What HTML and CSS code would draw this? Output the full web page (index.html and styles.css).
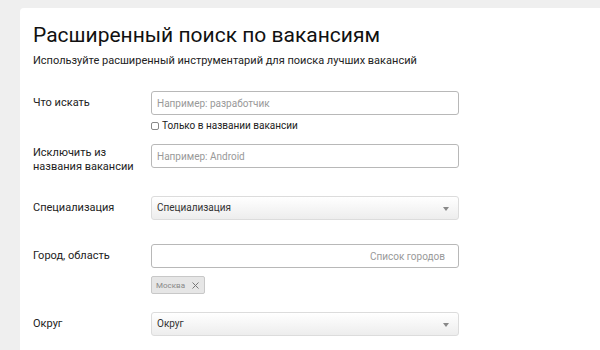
FILE: index.html
```html
<!DOCTYPE html>
<html lang="ru">
<head>
  <meta charset="UTF-8" />
  <meta name="viewport" content="width=device-width, initial-scale=1" />
  <title>Расширенный поиск по вакансиям</title>
  <link rel="stylesheet" href="styles.css">
</head>
<body>
  <div class="card">
    <h1>Расширенный поиск по вакансиям</h1>
    <p class="lead">Используйте расширенный инструментарий для поиска лучших вакансий</p>

    <form class="search-form">
      <div class="row row-note">
        <label class="row-label" for="query">Что искать</label>
        <div class="control">
          <input type="text" id="query" class="text-input" placeholder="Например: разработчик" />
          <label class="check">
            <input type="checkbox" />
            <span class="check-box"></span>
            Только в названии вакансии
          </label>
        </div>
      </div>

      <div class="row">
        <label class="row-label row-label-wrap" for="exclude">Исключить из названия вакансии</label>
        <div class="control">
          <input type="text" id="exclude" class="text-input" placeholder="Например: Android" />
        </div>
      </div>

      <div class="row">
        <span class="row-label">Специализация</span>
        <div class="control">
          <div class="select">Специализация<span class="select-arrow"></span></div>
        </div>
      </div>

      <div class="row row-tags">
        <label class="row-label" for="city">Город, область</label>
        <div class="control">
          <input type="text" id="city" class="text-input text-right" placeholder="Список городов" />
          <div class="tags">
            <span class="tag">Москва
              <svg class="tag-close" width="7" height="7" viewBox="0 0 7 7"><path d="M0.5 0.5L6.5 6.5M6.5 0.5L0.5 6.5" stroke="#777" stroke-width="1"/></svg>
            </span>
          </div>
        </div>
      </div>

      <div class="row row-last">
        <span class="row-label">Округ</span>
        <div class="control">
          <div class="select">Округ<span class="select-arrow"></span></div>
        </div>
      </div>
    </form>
  </div>
</body>
</html>
```

FILE: styles.css
```css
* {
  box-sizing: border-box;
}
html, body {
  height: 100%;
}
body {
  margin: 0;
  padding: 8px 0 0 20px;
  background: #efefef;
  color: #222;
  font-family: Roboto, "Liberation Sans", Arial, sans-serif;
  overflow: hidden;
}
.card {
  height: 100%;
  background: #fff;
  border-radius: 4px 0 0 0;
  padding: 14px 0 0 13px;
}
h1 {
  margin: 0;
  font-size: 21px;
  font-weight: 400;
  line-height: 26px;
  color: #111;
}
.lead {
  margin: 6px 0 0;
  font-size: 11px;
  line-height: 14px;
  color: #222;
}
.search-form {
  margin-top: 23px;
}
.row {
  display: flex;
  align-items: flex-start;
  margin-bottom: 24px;
}
.row-note {
  margin-bottom: 12px;
}
.row-tags {
  margin-bottom: 18px;
}
.row-last {
  margin-bottom: 0;
}
.row-label {
  width: 118px;
  flex-shrink: 0;
  padding-top: 5px;
  font-size: 11px;
  line-height: 14px;
  color: #222;
}
.row-label-wrap {
  padding-top: 2px;
  margin-bottom: -2px;
}
.control {
  width: 308px;
  display: flex;
  flex-direction: column;
}
.text-input {
  height: 24px;
  width: 100%;
  padding: 0 5px;
  border: 1px solid #b8b8b8;
  border-radius: 3px;
  font-family: inherit;
  font-size: 10px;
  color: #222;
  outline: none;
}
.text-input::placeholder {
  color: #999;
}
.text-right {
  text-align: right;
  padding-right: 13px;
}
.check {
  display: flex;
  align-items: center;
  gap: 3px;
  margin-top: 5px;
  font-size: 10px;
  line-height: 12px;
  color: #222;
}
.check input {
  display: none;
}
.check-box {
  width: 8px;
  height: 8px;
  border: 1px solid #888;
  border-radius: 2px;
}
.select {
  position: relative;
  height: 24px;
  padding: 0 5px;
  border: 1px solid #dcdcdc;
  border-radius: 3px;
  background: linear-gradient(#fff, #ededed);
  font-size: 10px;
  line-height: 22px;
  color: #333;
}
.select-arrow {
  position: absolute;
  right: 9px;
  top: 10px;
  border-left: 3px solid transparent;
  border-right: 3px solid transparent;
  border-top: 4px solid #888;
}
.tags {
  display: flex;
  margin-top: 8px;
}
.tag {
  display: inline-flex;
  align-items: center;
  gap: 7px;
  height: 18px;
  padding: 0 5px 0 4px;
  background: #e6e6e6;
  border: 1px solid #c8c8c8;
  border-radius: 2px;
  font-size: 8px;
  color: #888;
}
```
